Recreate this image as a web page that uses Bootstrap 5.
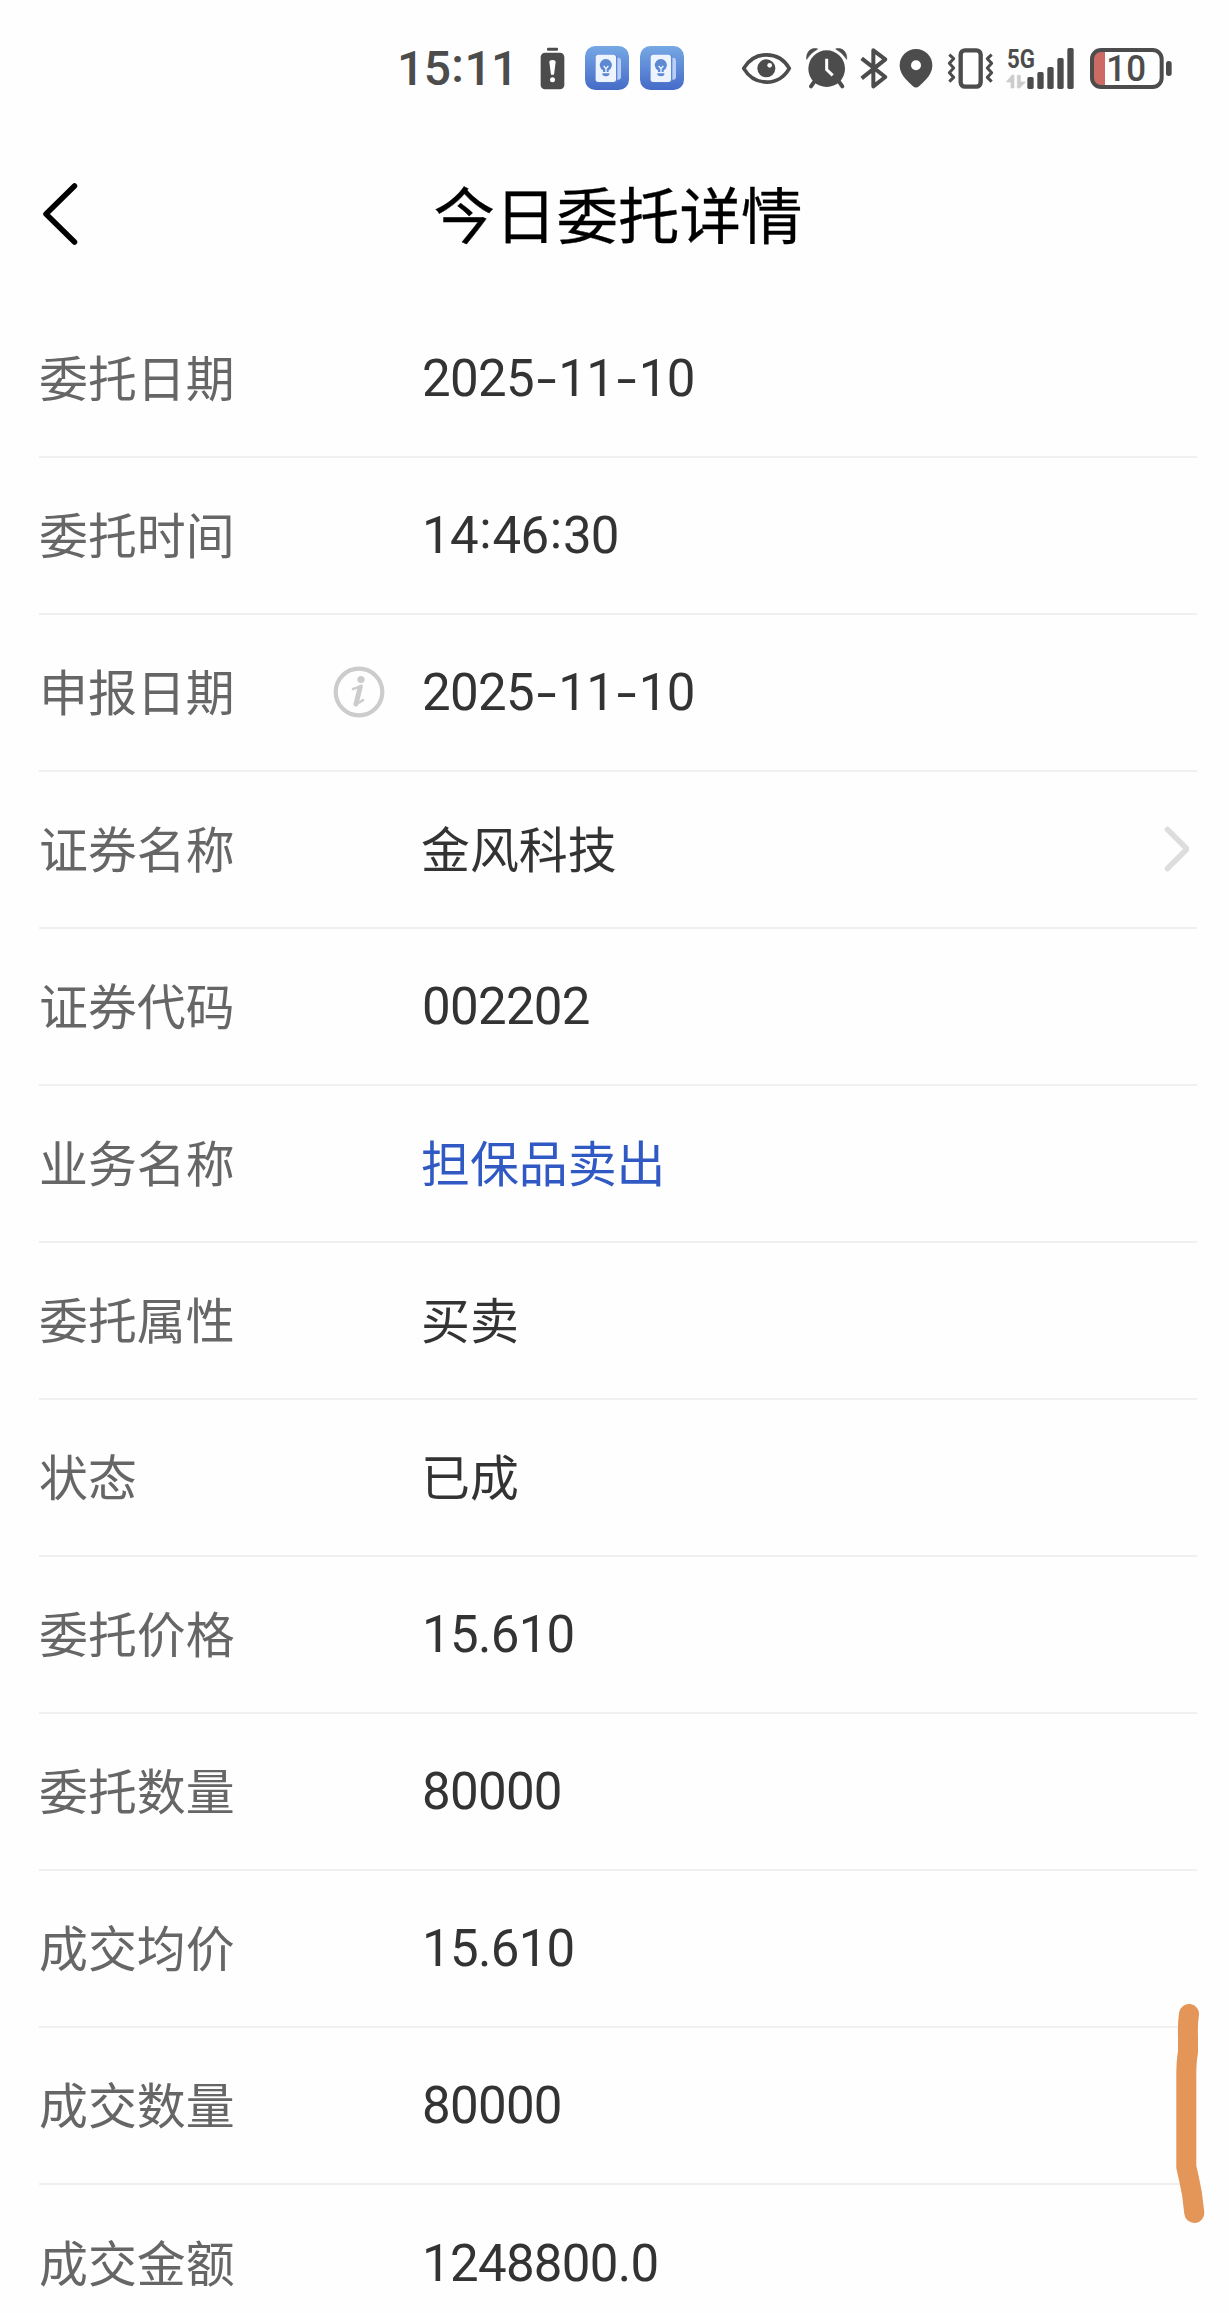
<!DOCTYPE html>
<html lang="zh-CN">
<head>
<meta charset="utf-8">
<meta name="viewport" content="width=device-width, initial-scale=1">
<title>今日委托详情</title>
<link rel="stylesheet" href="https://cdn.jsdelivr.net/npm/bootstrap@5.3.0/dist/css/bootstrap.min.css">
<style>
body{background:#fefefe;font-family:Roboto,"Noto Sans CJK SC",sans-serif;color:#333;overflow:hidden}
.phone{width:1229px;height:2313px;overflow:hidden}
.status{height:110px;padding:30px 0 0 397px;color:#4c4c4c}
.status svg{height:80px;flex:none;display:block}
.clock{width:139px;font-size:48px;font-weight:500;letter-spacing:-.6px;line-height:78px;flex:none}
.clock .colon{width:14px;transform:translateY(-3px)}
.topbar{height:191px;padding:16px 40px 0}
.topbar svg,.topbar .side{width:44px;height:70px;flex:none}
.title-text{font:400 61.5px/90px "Noto Sans CJK SC",sans-serif;color:#000;margin:-2px 0 0 7px;-webkit-text-stroke:.3px #000}
.entries{margin:0 32px 0 39px}
.entry{height:157px;border-bottom:2px solid #f0f0f0}
.entry:last-child{border:0}
.lab{width:290px;color:#666;font:400 48.9px/70px "Noto Sans CJK SC",sans-serif;padding-bottom:6px}
.hint{width:92px}
.val{font-size:48.9px;line-height:70px;color:#333;font-family:"Noto Sans CJK SC",sans-serif;padding-bottom:6px}
.num{font-family:Roboto,sans-serif;font-size:51px;letter-spacing:-.7px;padding:1px 0 0 1px}
.dash{display:inline-block;width:24.500px;text-align:center;transform:translateY(1px) scaleX(1.4)}
.colon{display:inline-block;width:14.500px;text-align:center;transform:translateY(-5px)}
.blue{color:#3059c4}
.marker{left:1160px;top:1990px;width:60px;height:240px}
</style>
</head>
<body>
<main class="phone position-relative">
<header class="status d-flex align-items-start">
<span class="clock">15<span class="colon">:</span>11</span>
<svg width="36" viewBox="468 0 108 240"><rect x="501" y="53" width="33" height="9" rx="3" fill="#4c4c4c"/><rect x="482" y="68" width="71" height="110" rx="13" fill="#4c4c4c"/><path d="M508 96q0-6 9.500-6t9.500 6l-5 38h-9z" fill="#fff"/><circle cx="517.500" cy="149" r="7.500" fill="#fff"/></svg>
<svg class="ms-2" width="55" viewBox="600 0 165 240"><defs><linearGradient id="g" x1="0" y1="0" x2="0" y2="1"><stop offset="0" stop-color="#76a8e4"/><stop offset="1" stop-color="#456bc8"/></linearGradient>
<g id="app"><rect x="615" y="48" width="132" height="132" rx="31" fill="url(#g)"/><rect x="690" y="83" width="33" height="66" rx="9" fill="#b9cdf5"/><rect x="645" y="74" width="67" height="83" rx="9" fill="#5c86d6"/><rect x="647" y="74" width="61" height="82" rx="8" fill="#eef4fd"/><path d="M669 126v-5a18 18 0 1 1 17 0v5zM667 130h21v4q-3 5-10 5t-11-5z" fill="#5d89d2"/><path d="M671 108l7 8 7-8M678 116v10" fill="none" stroke="#eef4fd" stroke-width="4"/></g></defs><use href="#app"/></svg>
<svg width="55" viewBox="765 0 165 240"><use href="#app" x="165"/></svg>
<svg class="ms-5" width="57" viewBox="54 0 171 240"><path d="M71 115C104 61 176 61 208 115C176 170 104 170 71 115z" fill="none" stroke="#4c4c4c" stroke-width="11" stroke-linejoin="round"/><circle cx="139" cy="115" r="27" fill="#4c4c4c"/><circle cx="149" cy="106" r="7" fill="#fff"/></svg>
<svg width="57" viewBox="225 0 171 240" fill="none" stroke="#4c4c4c"><circle cx="320" cy="116" r="55" fill="#4c4c4c" stroke="none"/><path d="M283 155l-10 14M357 155l10 14" stroke-width="12" stroke-linecap="round"/><path d="M260 88C258 66 273 51 293 57Q273 67 260 88zM380 88C382 66 367 51 347 57Q367 67 380 88z" fill="#4c4c4c" stroke-width="2"/><path d="M320 86v33l18 17" stroke="#fff" stroke-width="9"/></svg>
<svg width="40" viewBox="396 0 120 240"><path d="M425 85l71 56-36 28V61l36 27-71 57" fill="none" stroke="#4c4c4c" stroke-width="12" stroke-linejoin="round"/></svg>
<svg width="48" viewBox="516 0 144 240"><path d="M588 57a49 49 0 0 1 49 49c0 25-17 42-39 62q-10 9-20 0c-22-20-39-37-39-62a49 49 0 0 1 49-49z" fill="#4c4c4c"/><circle cx="588" cy="106" r="15" fill="#fff"/></svg>
<svg width="60" viewBox="660 0 180 240" fill="none" stroke="#4c4c4c"><rect x="722" y="61" width="60" height="109" rx="13" stroke-width="13"/><path d="M688 74l13 12-13 14 13 14-13 14 13 14-13 13M815 74l-13 12 13 14-13 14 13 14-13 14 13 13" stroke-width="9" stroke-linejoin="round"/></svg>
<svg width="80" viewBox="60 0 240 240"><text x="81" y="113" font-family="Roboto" font-size="78" font-weight="700" fill="#4c4c4c" textLength="84" lengthAdjust="spacingAndGlyphs">5G</text><path d="M79 156l17-21h6v39h-9v-18zM136 156l-17 18h-7v-38h9v20z" fill="#ccc" stroke="#ccc" stroke-width="2"/><g fill="#4c4c4c"><rect x="142" y="141" width="19" height="36" rx="5"/><rect x="172" y="126" width="19" height="51" rx="5"/><rect x="202" y="111" width="19" height="66" rx="5"/><rect x="232" y="84" width="19" height="93" rx="5"/><rect x="262" y="54" width="19" height="123" rx="5"/></g></svg>
<svg width="100" viewBox="300 0 300 240"><path d="M375 62h-14q-23 0-23 26v56q0 26 23 26h14z" fill="#cc6b64"/><rect x="336" y="60" width="209" height="111" rx="27" fill="none" stroke="#4c4c4c" stroke-width="12"/><rect x="558" y="93" width="17" height="45" rx="8" fill="#4c4c4c"/><text x="379" y="154" font-family="Roboto" font-size="112" font-weight="500" fill="#4c4c4c" textLength="119" lengthAdjust="spacingAndGlyphs">10</text></svg>
</header>
<nav class="topbar d-flex align-items-center justify-content-between">
<svg viewBox="0 0 44 70"><path d="M34.500 7L6 35l28.500 28" fill="none" stroke="#000" stroke-width="5.500" stroke-linecap="round" stroke-linejoin="round"/></svg>
<h1 class="title-text mb-0">今日委托详情</h1><span class="side"></span>
</nav>
<section class="entries">
<div class="entry d-flex align-items-center"><span class="lab">委托日期</span><span class="hint"></span><span class="val num">2025<span class="dash">-</span>11<span class="dash">-</span>10</span></div>
<div class="entry d-flex align-items-center"><span class="lab">委托时间</span><span class="hint"></span><span class="val num">14<span class="colon">:</span>46<span class="colon">:</span>30</span></div>
<div class="entry d-flex align-items-center"><span class="lab">申报日期</span><span class="hint"><svg class="d-block" width="60" height="60" viewBox="-30 -29 60 60"><circle r="23.300" fill="none" stroke="#ccc" stroke-width="4.200"/><circle cx="2" cy="-12.500" r="3.600" fill="#ccc"/><path d="M-6-3Q0-5 2.500-6.500L-2 11Q-1.500 12 4 8" fill="none" stroke="#ccc" stroke-width="2.500" stroke-linecap="round" stroke-linejoin="round"/><path d="M1-4L-3 12" stroke="#ccc" stroke-width="5" stroke-linecap="round"/></svg></span><span class="val num">2025<span class="dash">-</span>11<span class="dash">-</span>10</span></div>
<div class="entry d-flex align-items-center"><span class="lab">证券名称</span><span class="hint"></span><span class="val">金风科技</span><svg class="ms-auto me-2" width="26" height="50" viewBox="0 0 26 50"><path d="M4.500 4.500L24 24 4.500 43.500" fill="none" stroke="#ddd" stroke-width="5.500" stroke-linecap="round"/></svg></div>
<div class="entry d-flex align-items-center"><span class="lab">证券代码</span><span class="hint"></span><span class="val num">002202</span></div>
<div class="entry d-flex align-items-center"><span class="lab">业务名称</span><span class="hint"></span><span class="val blue">担保品卖出</span></div>
<div class="entry d-flex align-items-center"><span class="lab">委托属性</span><span class="hint"></span><span class="val">买卖</span></div>
<div class="entry d-flex align-items-center"><span class="lab">状态</span><span class="hint"></span><span class="val">已成</span></div>
<div class="entry d-flex align-items-center"><span class="lab">委托价格</span><span class="hint"></span><span class="val num">15.610</span></div>
<div class="entry d-flex align-items-center"><span class="lab">委托数量</span><span class="hint"></span><span class="val num">80000</span></div>
<div class="entry d-flex align-items-center"><span class="lab">成交均价</span><span class="hint"></span><span class="val num">15.610</span></div>
<div class="entry d-flex align-items-center"><span class="lab">成交数量</span><span class="hint"></span><span class="val num">80000</span></div>
<div class="entry d-flex align-items-center"><span class="lab">成交金额</span><span class="hint"></span><span class="val num">1248800.0</span></div>
</section>
<svg class="marker position-absolute" viewBox="1160 1990 60 240"><path d="M1189 2014Q1187.500 2024 1188 2036V2052Q1186.300 2062 1186.300 2075V2167Q1189 2178 1192 2194L1194.300 2213" fill="none" stroke="#e49558" stroke-width="20" stroke-linecap="round" stroke-linejoin="round"/></svg>
</main>
<script src="https://cdn.jsdelivr.net/npm/bootstrap@5.3.0/dist/js/bootstrap.bundle.min.js"></script>
</body>
</html>
